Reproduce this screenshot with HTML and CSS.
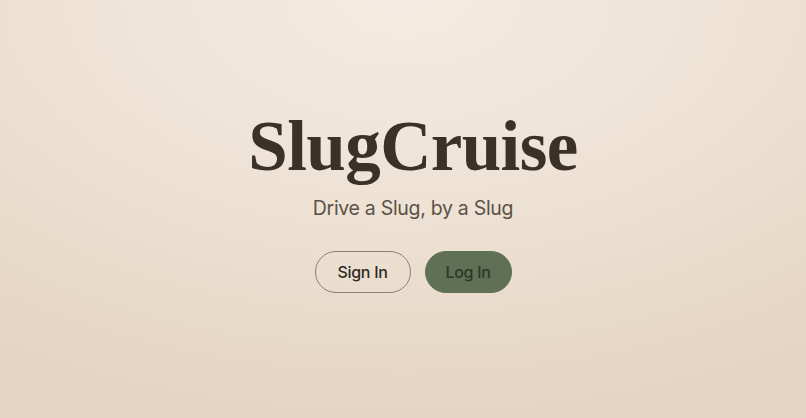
FILE: index.html
```html
<!doctype html>
<html>
<head>
	<meta charset="utf-8">
	<title>SlugCruise</title>
	<link rel="stylesheet" href="styles.css">
</head>
<body>
	<div class="hero">
		<h1 class="title">SlugCruise</h1>
		<p class="tagline">Drive a Slug, by a Slug</p>
		<div class="actions">
			<button class="btn btn-outline">Sign In</button>
			<button class="btn btn-solid">Log In</button>
		</div>
	</div>
</body>
</html>
```

FILE: styles.css
```css
html, body {
	margin: 0;
	height: 100%;
}
body {
	background: radial-gradient(ellipse 90% 100% at 50% 0%, #f4ece2 0%, #ede2d4 50%, #e5d5c2 100%);
	font-family: Inter, "Noto Sans", sans-serif;
}
.hero {
	display: flex;
	flex-direction: column;
	align-items: center;
	justify-content: center;
	height: 100%;
	padding-left: 20px;
	padding-bottom: 19px;
	box-sizing: border-box;
}
.title {
	margin: 0 0 9px;
	font-family: "Liberation Serif", serif;
	font-weight: bold;
	font-size: 71px;
	line-height: 80px;
	color: #3b3127;
	letter-spacing: -0.6px;
}
.tagline {
	margin: 1px 0 0;
	font-size: 19.5px;
	line-height: 24px;
	color: #5b5148;
	letter-spacing: -0.3px;
}
.actions {
	display: flex;
	gap: 14px;
	margin-top: 31px;
}
.btn {
	height: 42px;
	border-radius: 21px;
	font-family: Inter, "Noto Sans", sans-serif;
	font-size: 16px;
	font-weight: 500;
	letter-spacing: -0.3px;
	box-sizing: border-box;
}
.btn-outline {
	width: 96px;
	background: transparent;
	border: 1px solid #8c8074;
	color: #2e2a25;
}
.btn-solid {
	width: 87px;
	background: #5f7055;
	border: 1px solid #5f7055;
	color: #2c3728;
}
```
